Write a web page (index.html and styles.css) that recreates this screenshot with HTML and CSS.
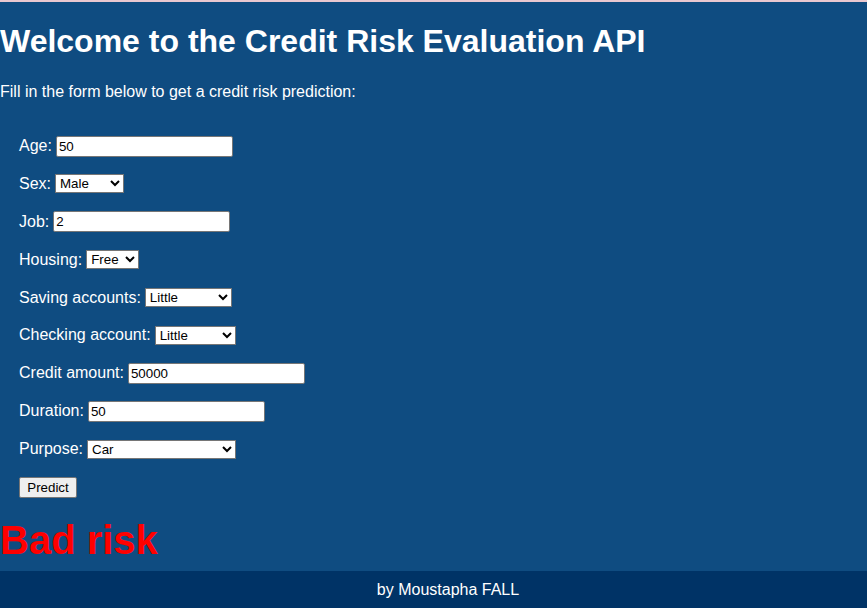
FILE: index.html
```html
<!DOCTYPE html>
<html lang="en">
<head>
<meta charset="utf-8">
<title>Credit Risk Evaluation API</title>
<link rel="stylesheet" href="styles.css">
</head>
<body>
<main class="main">
  <h1 class="title">Welcome to the Credit Risk Evaluation API</h1>
  <p class="intro">Fill in the form below to get a credit risk prediction:</p>
  <form class="form">
    <div class="row"><label for="age">Age:</label><input class="text" id="age" type="text" value="50"></div>
    <div class="row"><label for="sex">Sex:</label>
      <select class="sel w-sex" id="sex"><option>Male</option><option>Female</option></select></div>
    <div class="row"><label for="job">Job:</label><input class="text" id="job" type="text" value="2"></div>
    <div class="row"><label for="housing">Housing:</label>
      <select class="sel w-housing" id="housing"><option>Free</option><option>Own</option><option>Rent</option></select></div>
    <div class="row"><label for="saving">Saving accounts:</label>
      <select class="sel w-saving" id="saving"><option>Little</option><option>Moderate</option><option>Rich</option></select></div>
    <div class="row"><label for="checking">Checking account:</label>
      <select class="sel w-checking" id="checking"><option>Little</option><option>Moderate</option><option>Rich</option></select></div>
    <div class="row"><label for="amount">Credit amount:</label><input class="text" id="amount" type="text" value="50000"></div>
    <div class="row"><label for="duration">Duration:</label><input class="text" id="duration" type="text" value="50"></div>
    <div class="row"><label for="purpose">Purpose:</label>
      <select class="sel w-purpose" id="purpose"><option>Car</option><option>Business</option><option>Education</option></select></div>
    <div class="row"><button class="btn" type="button">Predict</button></div>
  </form>
  <h2 class="result">Bad risk</h2>
</main>
<footer class="footer">by Moustapha FALL</footer>
</body>
</html>
```
FILE: styles.css
```css
html, body {
  margin: 0;
  padding: 0;
}
body {
  min-height: 100vh;
  box-sizing: border-box;
  display: flex;
  flex-direction: column;
  background: #0f4c81;
  color: #ffffff;
  font-family: "Liberation Sans", Arial, sans-serif;
  font-size: 16px;
  border-top: 2px solid #e9c8d0;
  overflow: hidden;
}
.main {
  flex: 1;
}
.title {
  margin: 21px 0 22.5px;
  font-size: 32px;
  font-weight: bold;
}
.intro {
  margin: 0;
}
.form {
  padding: 35px 0 0 19px;
  display: flex;
  flex-direction: column;
  gap: 16.9px;
}
.row {
  display: flex;
  align-items: center;
  gap: 4px;
  height: 21px;
}
.text {
  box-sizing: border-box;
  width: 177px;
  height: 21px;
  border: 1px solid #767676;
  border-radius: 2px;
  padding: 1px 2px;
  background: #ffffff;
  color: #000000;
  font-family: "Liberation Sans", Arial, sans-serif;
  font-size: 13.33px;
  margin: 0;
}
.sel {
  box-sizing: border-box;
  height: 19px;
  margin: 0;
  font-family: "Liberation Sans", Arial, sans-serif;
  font-size: 13.33px;
  color: #000000;
  background: #ffffff;
  border: 1px solid #767676;
  border-radius: 0;
}
.w-sex { width: 69px; }
.w-housing { width: 53px; }
.w-saving { width: 87px; }
.w-checking { width: 81px; }
.w-purpose { width: 149px; }
.btn {
  box-sizing: border-box;
  width: 58px;
  height: 21px;
  margin: 0;
  padding: 1px 6px;
  font-family: "Liberation Sans", Arial, sans-serif;
  font-size: 13.33px;
  color: #000000;
  background: #efefef;
  border: 1px solid #767676;
  border-radius: 2px;
}
.result {
  margin: 20px 0 0;
  font-size: 40px;
  font-weight: bold;
  color: #ff0000;
}
.footer {
  background: #003366;
  color: #ffffff;
  text-align: center;
  padding: 9.3px 0 9.3px 29px;
}
```
